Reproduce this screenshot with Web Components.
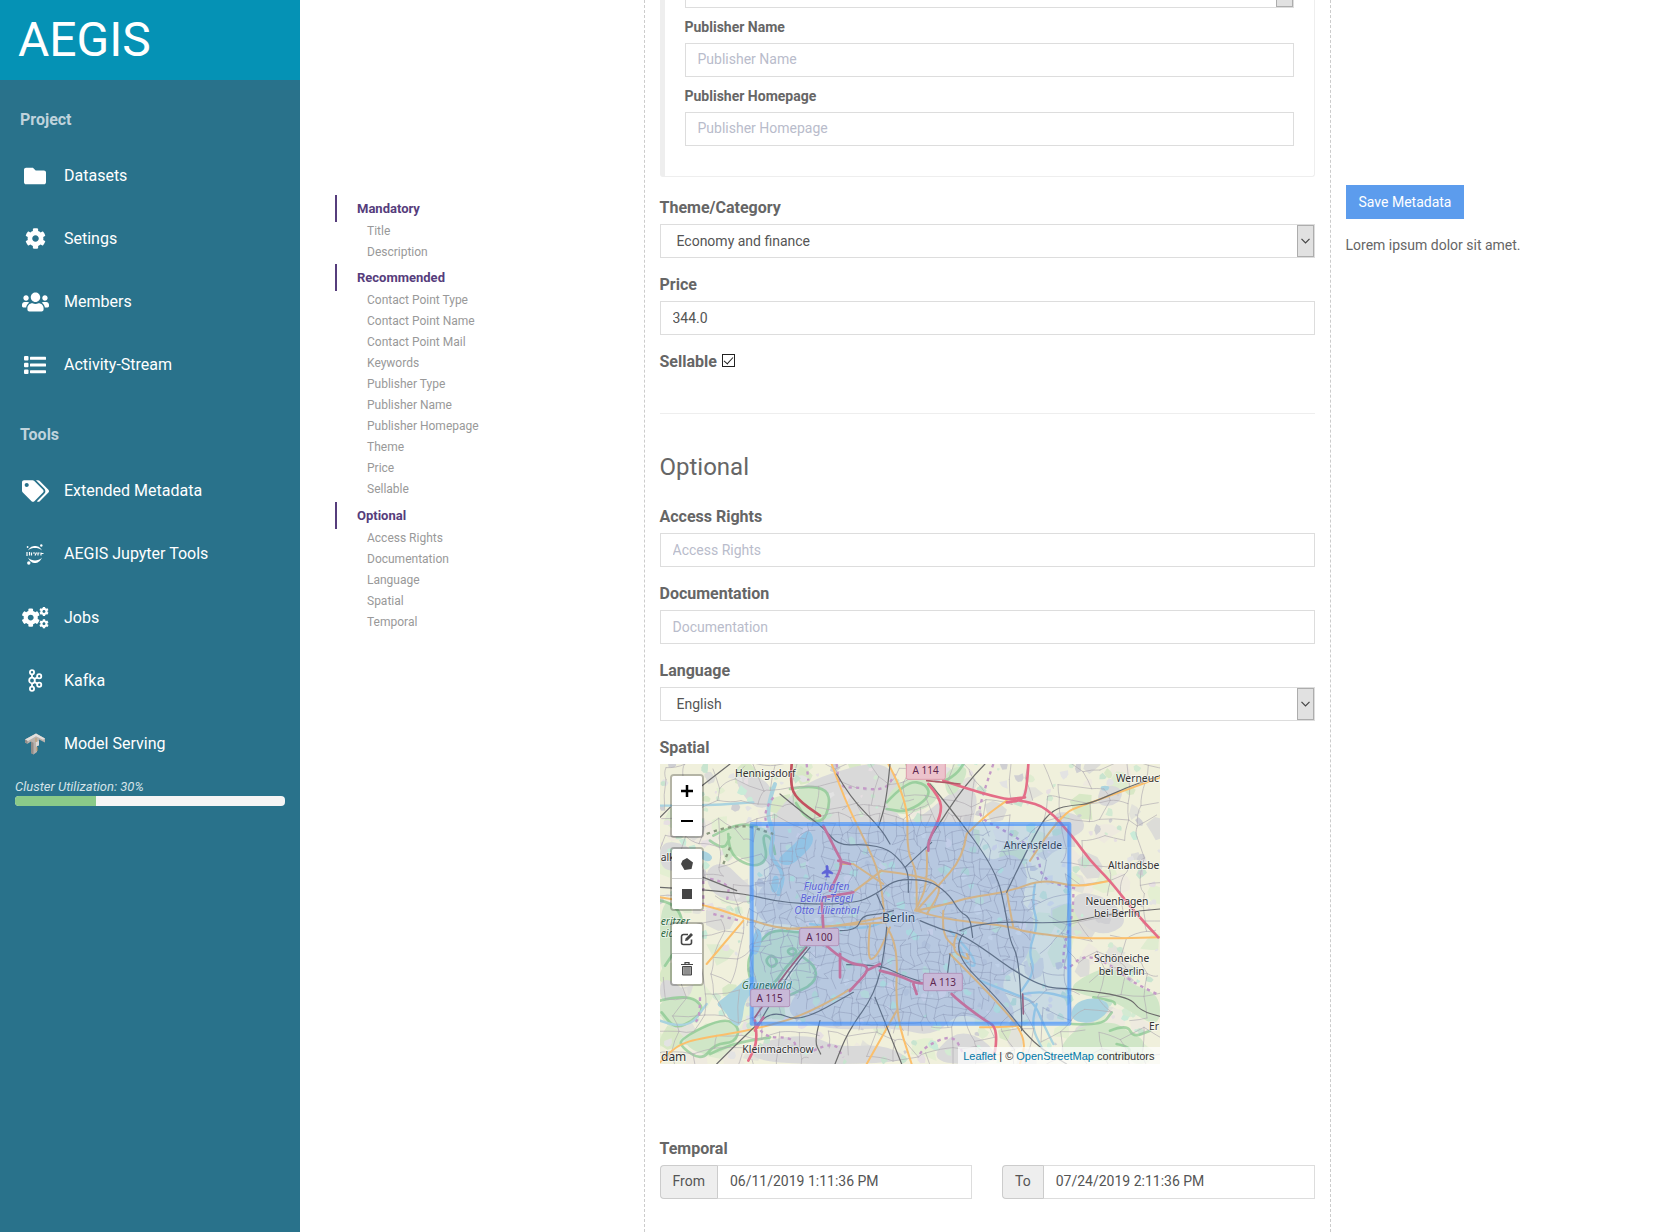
<!DOCTYPE html>
<html lang="en">
<head>
<meta charset="utf-8">
<title>AEGIS Metadata</title>
<style>
  body { margin: 0; font: 14px/20px Roboto, "Liberation Sans", sans-serif; color: #666; background: #fff; }
</style>
</head>
<body>
<app-shell>
  <side-bar slot="side">
    <nav-group heading="Project">
      <nav-item icon="folder">Datasets</nav-item>
      <nav-item icon="cog">Setings</nav-item>
      <nav-item icon="users">Members</nav-item>
      <nav-item icon="list">Activity-Stream</nav-item>
    </nav-group>
    <nav-group heading="Tools">
      <nav-item icon="tags">Extended Metadata</nav-item>
      <nav-item icon="jupyter" logo>AEGIS Jupyter Tools</nav-item>
      <nav-item icon="cogs">Jobs</nav-item>
      <nav-item icon="kafka">Kafka</nav-item>
      <nav-item icon="tensor" logo>Model Serving</nav-item>
    </nav-group>
    <usage-meter value="30"></usage-meter>
  </side-bar>
  <page-toc slot="toc">
    <toc-group heading="Mandatory" items="Title|Description"></toc-group>
    <toc-group heading="Recommended" items="Contact Point Type|Contact Point Name|Contact Point Mail|Keywords|Publisher Type|Publisher Name|Publisher Homepage|Theme|Price|Sellable"></toc-group>
    <toc-group heading="Optional" items="Access Rights|Documentation|Language|Spatial|Temporal"></toc-group>
  </page-toc>
  <metadata-form slot="form"></metadata-form>
  <save-panel slot="actions"></save-panel>
</app-shell>

<script>
const define = (name, html, setup) => {
  const tpl = document.createElement('template');
  tpl.innerHTML = '<style>*{box-sizing:border-box}:host{display:block}</style>' + html;
  customElements.define(name, class extends HTMLElement {
    constructor() {
      super();
      this.attachShadow({ mode: 'open' }).append(tpl.content.cloneNode(true));
    }
    connectedCallback() {
      if (setup && !this.ready) { this.ready = true; setup(this, this.shadowRoot); }
    }
  });
};

const COG = 'M487.4 315.7l-42.6-24.6c4.3-23.2 4.3-47 0-70.2l42.6-24.6c4.9-2.8 7.1-8.6 5.5-14-11.1-35.6-30-67.8-54.7-94.6-3.8-4.1-10-5.1-14.8-2.3L380.8 110c-17.9-15.4-38.5-27.3-60.8-35.1V25.8c0-5.6-3.9-10.5-9.4-11.7-36.7-8.2-74.3-7.8-109.2 0-5.5 1.2-9.4 6.1-9.4 11.7V75c-22.2 7.9-42.8 19.8-60.8 35.1L88.7 85.5c-4.9-2.8-11-1.9-14.8 2.3-24.7 26.7-43.6 58.9-54.7 94.6-1.7 5.4.6 11.2 5.5 14L67.3 221c-4.3 23.2-4.3 47 0 70.2l-42.6 24.6c-4.9 2.8-7.1 8.6-5.5 14 11.1 35.6 30 67.8 54.7 94.6 3.8 4.1 10 5.1 14.8 2.3l42.6-24.6c17.9 15.4 38.5 27.3 60.8 35.1v49.2c0 5.6 3.9 10.5 9.4 11.7 36.7 8.2 74.3 7.8 109.2 0 5.5-1.2 9.4-6.1 9.4-11.7v-49.2c22.2-7.9 42.8-19.8 60.8-35.1l42.6 24.6c4.9 2.8 11 1.9 14.8-2.3 24.7-26.7 43.6-58.9 54.7-94.6 1.5-5.5-.7-11.3-5.6-14.1zM256 336c-44.1 0-80-35.9-80-80s35.9-80 80-80 80 35.9 80 80-35.9 80-80 80z';
const ICONS = {
  folder: [22, 22, '0 0 512 512', '<path d="M464 128H272l-64-64H48C21.5 64 0 85.5 0 112v288c0 26.5 21.5 48 48 48h416c26.5 0 48-21.5 48-48V176c0-26.5-21.5-48-48-48z"/>'],
  cog: [21, 21, '0 0 512 512', `<path d="${COG}"/>`],
  users: [27, 22, '0 0 640 512', '<path d="M96 224c35.3 0 64-28.7 64-64s-28.7-64-64-64-64 28.7-64 64 28.7 64 64 64zm448 0c35.3 0 64-28.7 64-64s-28.7-64-64-64-64 28.7-64 64 28.7 64 64 64zm32 32h-64c-17.6 0-33.5 7.1-45.1 18.6 40.3 22.1 68.9 62 75.1 109.4h66c17.7 0 32-14.3 32-32v-32c0-35.3-28.7-64-64-64zm-256 0c61.9 0 112-50.1 112-112S381.9 32 320 32 208 82.1 208 144s50.1 112 112 112zm76.8 32h-8.3c-20.8 10-43.9 16-68.5 16s-47.6-6-68.5-16h-8.3C179.6 288 128 339.6 128 403.2V432c0 26.5 21.5 48 48 48h288c26.5 0 48-21.5 48-48v-28.8c0-63.6-51.6-115.2-115.2-115.2zm-223.7-13.4C161.5 263.1 145.6 256 128 256H64c-35.3 0-64 28.7-64 64v32c0 17.7 14.3 32 32 32h65.9c6.3-47.4 34.9-87.3 75.2-109.4z"/>'],
  list: [22, 18, '0 0 22 18', '<rect width="4.5" height="4.5" rx="1"/><rect y="6.8" width="4.5" height="4.5" rx="1"/><rect y="13.5" width="4.5" height="4.5" rx="1"/><rect x="6" y=".8" width="16" height="3" rx=".6"/><rect x="6" y="7.5" width="16" height="3" rx=".6"/><rect x="6" y="14.2" width="16" height="3" rx=".6"/>'],
  tags: [27, 22, '0 0 640 512', '<path d="M497.9 225.9L286 14A48 48 0 0 0 252 0H48C21.5 0 0 21.5 0 48v204a48 48 0 0 0 14 34l212 212c18.7 18.7 49 18.7 67.8 0l204-204c18.8-18.7 18.8-49 .1-68zM112 160c-26.5 0-48-21.5-48-48s21.5-48 48-48 48 21.5 48 48-21.5 48-48 48zm514 133.8L421.8 498c-18.7 18.7-49 18.7-67.9 0l-.3-.4L527.6 323.5c17-17 26.4-39.6 26.4-63.6s-9.4-46.7-26.4-63.7L331.4 0h48.7a48 48 0 0 1 34 14L626 226c18.7 18.7 18.7 49 0 67.8z"/>'],
  jupyter: [18, 21, '0 0 18 21', '<path d="M2 6.5C4 2.7 6.5 2 9 2s5 .7 7 4.5C14 4.600 11.5 4 9 4s-5 .6-7 2.500zM2 13.500C4 17.800 6.500 19 9 19s5-1.200 7-5.500c-2 2.200-4.500 3-7 3s-5-.8-7-3z"/><circle cx="15.300" cy="1.500" r="1.200"/><circle cx="1.600" cy="3" r=".9"/><circle cx="2.800" cy="19" r="1.700"/><path d="M1 8v4M3.500 8v3.500M5.500 8.500v3M7 9h2M9 11.500l1.500-3M12 8.500v3M12 9h1.500M15 8.500v3M15.500 9.500h2" stroke="#fff" stroke-width="1.200"/>'],
  cogs: [27, 22, '0 0 27 22', `<g transform="translate(-.7 1.2) scale(.0368)"><path d="${COG}"/></g><g transform="translate(17.2 -.3) scale(.0186)"><path d="${COG}"/></g><g transform="translate(17.2 12) scale(.0186)"><path d="${COG}"/></g>`],
  kafka: [16, 23, '0 0 16 23', '<g fill="none" stroke="#fff" stroke-width="1.8"><circle cx="5" cy="3.2" r="2.100"/><circle cx="5" cy="11.5" r="2.8"/><circle cx="5" cy="19.8" r="2.1"/><circle cx="12.2" cy="7.3" r="2.1"/><circle cx="12.2" cy="15.7" r="2.1"/><path d="M5 5.3v3.4M5 14.3v3.4M7.5 10l2.8-1.6M7.5 13l2.8 1.6"/></g>'],
  tensor: [20, 22, '0 0 20 22', '<path d="M0 6.5L11 .5l9 5v4l-6-3v5l-2 1v6.5L8.5 21.5 6 20V8.5L2.5 10.8 0 9.5z" fill="#b9b3ae"/><path d="M0 6.5L11 .5l9 5-2 1.3-7-3.6-8.5 5z" fill="#e3dfdc"/><path d="M11 9l3-1v4.500l-3 1z" fill="#dcd8d4"/><path d="M6 8.5l2.5 1.3v11.700L6 20zM0 6.500l2.500 1.200v3.100L0 9.500z" fill="#928c88"/><path d="M11 5v4M12 14v4" stroke="#c79a63" stroke-width="1"/>']
};

define('app-shell', `
<style>
  :host { display: grid; grid-template-columns: 300px minmax(0, 1fr); min-height: 100vh; }
  main { display: grid; grid-template-columns: minmax(0, 1fr) minmax(0, 2fr) minmax(0, 1fr); overflow: hidden; }
  .middle { border: dashed #ccc; border-width: 0 1px; padding: 0 15px; }
  .right { padding: 185px 15px 0; }
  .left { padding-top: 195px; }
</style>
<slot name="side"></slot>
<main>
  <div class="left"><slot name="toc"></slot></div>
  <div class="middle"><slot name="form"></slot></div>
  <div class="right"><slot name="actions"></slot></div>
</main>`);

define('side-bar', `
<style>
  :host { background: #29728b; color: #fff; }
  header { height: 80px; padding: 0 18px; background: #0592b5; display: flex; align-items: center; }
  .brand { font: 48px/60px Roboto, "Liberation Sans", sans-serif; }
</style>
<header><div class="brand">AEGIS</div></header>
<slot></slot>`);

define('nav-group', `
<style>
  h2 { margin: 0; padding: 28px 20px 13px; font-size: 16px; line-height: 23px; font-weight: 700; color: #bfd3dc; }
  :host(:not(:first-child)) h2 { padding-top: 27px; }
</style>
<h2></h2><nav><slot></slot></nav>`, (el, root) => {
  root.querySelector('h2').textContent = el.getAttribute('heading');
});

define('nav-item', `
<style>
  a { display: flex; align-items: center; gap: 14px; height: 63px; padding: 0 20px; color: #fff; font-size: 16px; text-decoration: none; }
  :host([logo]) a { height: 64px; }
  .icon { flex: none; width: 30px; display: flex; justify-content: center; }
  svg { display: block; fill: #fff; }
</style>
<a href="#"><span class="icon"></span><slot></slot></a>`, (el, root) => {
  const [w, h, box, body] = ICONS[el.getAttribute('icon')];
  root.querySelector('.icon').innerHTML = `<svg width="${w}" height="${h}" viewBox="${box}" aria-hidden="true">${body}</svg>`;
});

define('usage-meter', `
<style>
  :host { padding: 2px 15px; }
  .text { font-size: 13px; line-height: 18px; font-style: italic; color: #d4e3e8; }
  .track { height: 10px; border-radius: 4px; background: #f5f5f5; overflow: hidden; }
  .bar { height: 100%; background: #8aca89; }
</style>
<div class="text"></div><div class="track" role="progressbar"><div class="bar"></div></div>`, (el, root) => {
  const v = el.getAttribute('value') + '%';
  root.querySelector('.text').textContent = 'Cluster Utilization: ' + v;
  root.querySelector('.bar').style.width = v;
});

define('page-toc', `<style>:host { padding-left: 35px; }</style><nav><slot></slot></nav>`);

define('toc-group', `
<style>
  :host(:not(:first-child)) { margin-bottom: 1px; }
  a { display: block; color: #999; text-decoration: none; font-size: 12px; line-height: 18px; padding: 0 0 3px 32px; }
  a.head { border-left: 2px solid #563d7c; padding: 4px 0 3px 20px; font-size: 13px; line-height: 20px; font-weight: 700; color: #563d7c; }
</style>`, (el, root) => {
  const add = (text, cls) => {
    const a = document.createElement('a');
    a.href = '#'; a.className = cls; a.textContent = text;
    root.append(a);
  };
  add(el.getAttribute('heading'), 'head');
  el.getAttribute('items').split('|').forEach(t => add(t, ''));
});

const FIELD = `
<style>
  :host { margin-bottom: 15px; }
  :host([compact]) { margin-bottom: 8px; }
  label { display: block; font-size: 16px; line-height: 23px; font-weight: 700; color: #666; margin-bottom: 5px; }
  :host([compact]) label { font-size: 14px; margin-bottom: 4px; }
  input, select { display: block; width: 100%; height: 34px; margin: 0; border: 1px solid #ddd; border-radius: 0; background: #fff; padding: 0 12px; font: 14px/20px Roboto, "Liberation Sans", sans-serif; color: #555; }
  :host([compact]) input { padding-bottom: 2px; }
  input::placeholder { color: #b9bccb; opacity: 1; }
</style>`;

define('text-field', FIELD + `<label for="c"></label><input id="c" type="text">`, (el, root) => {
  root.querySelector('label').textContent = el.getAttribute('label');
  const input = root.querySelector('input');
  input.value = el.getAttribute('value') || '';
  input.placeholder = el.getAttribute('placeholder') || '';
});

define('select-field', FIELD + `
<style>
  .wrap { position: relative; }
  select { appearance: none; padding-left: 16px; }
  .arrow { position: absolute; top: 1px; right: 1px; bottom: 1px; width: 17px; border: 1px solid #adadad; background: #e1e1e1; pointer-events: none; display: flex; align-items: center; justify-content: center; }
</style>
<label for="c"></label>
<div class="wrap"><select id="c"><option></option></select>
<span class="arrow"><svg width="9" height="6" viewBox="0 0 9 6"><path d="M.5 .8l4 4 4-4" fill="none" stroke="#444" stroke-width="1.2"/></svg></span></div>`, (el, root) => {
  const label = root.querySelector('label');
  if (el.hasAttribute('label')) label.textContent = el.getAttribute('label');
  else { label.remove(); root.querySelector('select').setAttribute('aria-label', 'Publisher'); }
  root.querySelector('option').textContent = el.getAttribute('value') || '';
});

define('check-field', `
<style>
  label { display: inline-flex; align-items: center; gap: 5px; font-size: 16px; line-height: 23px; font-weight: 700; color: #666; }
  input { appearance: none; margin: 0 0 2px; width: 13px; height: 13px; border: 1px solid #222; background: #fff; display: flex; justify-content: center; }
  input:checked::before { content: ""; width: 4px; height: 8px; border: solid #222; border-width: 0 1px 1px 0; transform: rotate(42deg); }
</style>
<label><slot></slot><input type="checkbox" checked></label>`);

define('date-field', `
<style>
  :host { display: flex; }
  label { flex: none; padding: 5px 12px; height: 34px; line-height: 20px; border: 1px solid #ccc; border-right: 0; border-radius: 4px 0 0 4px; background: #eee; color: #555; }
  input { flex: 1; min-width: 0; height: 34px; margin: 0; border: 1px solid #ddd; border-left-color: #ccc; padding: 0 12px 2px; font: 14px/20px Roboto, "Liberation Sans", sans-serif; color: #555; }
</style>
<label for="d"></label><input id="d" type="text">`, (el, root) => {
  root.querySelector('label').textContent = el.getAttribute('label');
  root.querySelector('input').value = el.getAttribute('value');
});

define('metadata-form', `
<style>
  .box { margin-top: -26px; padding: 0 20px 22px; border: 1px solid #eee; border-left-width: 5px; border-top: 0; border-radius: 3px; margin-bottom: 19px; }
  hr { border: 0; border-top: 1px solid #eee; margin: 40px 0; }
  h3 { margin: 0 0 25px; font-size: 24px; line-height: 27px; font-weight: 400; }
  h4 { margin: 0 0 5px; font-size: 16px; line-height: 23px; font-weight: 700; }
  h3 + text-field { margin-top: -1px; }
  map-view { margin-bottom: 73px; }
  .dates { display: grid; grid-template-columns: 1fr 1fr; gap: 30px; }
</style>
<form>
  <div class="box">
    <select-field compact></select-field>
    <text-field compact label="Publisher Name" placeholder="Publisher Name"></text-field>
    <text-field compact label="Publisher Homepage" placeholder="Publisher Homepage"></text-field>
  </div>
  <select-field label="Theme/Category" value="Economy and finance"></select-field>
  <text-field label="Price" value="344.0"></text-field>
  <check-field>Sellable</check-field>
  <hr>
  <h3>Optional</h3>
  <text-field label="Access Rights" placeholder="Access Rights"></text-field>
  <text-field label="Documentation" placeholder="Documentation"></text-field>
  <select-field label="Language" value="English"></select-field>
  <h4>Spatial</h4>
  <map-view></map-view>
  <h4>Temporal</h4>
  <div class="dates">
    <date-field label="From" value="06/11/2019 1:11:36 PM"></date-field>
    <date-field label="To" value="07/24/2019 2:11:36 PM"></date-field>
  </div>
</form>`);

define('save-panel', `
<style>
  button { height: 34px; padding: 0 13px; border: 0; background: #5c9ced; color: #fff; font: 14px/20px Roboto, "Liberation Sans", sans-serif; }
  p { margin: 16px 0 0; line-height: 20px; }
</style>
<button type="button">Save Metadata</button>
<p>Lorem ipsum dolor sit amet.</p>`);

define('map-view', `
<style>
  :host { position: relative; width: 500px; max-width: 100%; height: 300px; overflow: hidden; background: #f0f0dc; }
  svg.map { display: block; width: 500px; height: 300px; }
  svg.map text { font-family: "Noto Sans", sans-serif; font-size: 31px; fill: #333; text-anchor: middle; paint-order: stroke; stroke: #fff; stroke-opacity: .6; stroke-width: 5px; stroke-linejoin: round; }
  svg.map .left { text-anchor: start; }
  svg.map .right { text-anchor: end; }
  svg.map .air text { font-style: italic; fill: #6a5acd; stroke-opacity: .3; }
  svg.map .green { font-style: italic; fill: #2f6b46; }
  svg.map .big { font-size: 36px; }
  svg.map .shield text { stroke: none; fill: #5e2750; font-size: 30px; }
  .tools { position: absolute; top: 10px; left: 10px; display: flex; flex-direction: column; gap: 9px; }
  .bar { border: 2px solid rgba(0,0,0,.25); border-radius: 4px; background-clip: padding-box; }
  .bar:last-child { margin-top: 2px; }
  button { display: flex; align-items: center; justify-content: center; width: 30px; height: 30px; padding: 0; border: 0; background: #fff; }
  button:first-child { border-bottom: 1px solid #ccc; border-radius: 2px 2px 0 0; }
  button:last-child { border-radius: 0 0 2px 2px; }
  .attr { position: absolute; right: 0; bottom: 0; padding: 2px 5px 0; background: rgba(255,255,255,.7); font: 11px/15px "Liberation Sans", sans-serif; color: #333; }
  .attr a { color: #0078a8; text-decoration: none; }
</style>
<svg class="map" viewBox="0 0 1500 900" fill="none" stroke-linejoin="round" stroke-linecap="round">
  <rect width="1500" height="900" fill="#f0f0dc"/>
  <g class="patches"></g>
  <g fill="#d9d9d9" class="soft">
    <path d="M330 170L420 60 600 0 680 0 720 60 700 150 760 180 900 60 960 90 930 200 980 300 1060 260 1110 330 1080 420 1130 460 1100 600 1010 650 1080 760 1000 790 900 740 820 820 700 790 520 800 380 760 400 690 480 640 440 560 420 480 300 480 280 400 340 330 300 240z"/>
    <path d="M130 320l60-30 60 60 50 40-30 30-110-20zM0 230l80 10 60 60-60 20-80 0zM300 830l150-20 80 40 150-10 90 60-510 0zM1240 380l110 20 60 80-90 40-80-60zM1170 140l90 10 20 50-70 30zM640 60l60 30-20 80-60-20zM210 30l110 10 30 80-70 20zM0 640l60 20 30 60-90 0zM880 800l90 20 60 80-230 0zM1320 60l70 10-10 50-70 10z"/>
  </g>
  <g class="spots"></g>
  <g fill="#d0e6c7" class="soft">
    <path d="M390 90l50-25 60 10 10 50-20 60-60-30-30-40zM170 215l60-40 110 20-10 90-50 20-60-40-20 40-20-70z"/>
    <path d="M290 540l45-48 80 12 70 0-45 50-70 80-10 50-80 0-10-80zM430 580l40 20 0 60-80 30-10-40zM0 710l80-20 55 40-40 40-60 30-40-50zM70 810l120-50 50 30-10 50-80 40-70-30zM0 410l60 10 20 100-60 90-20 10z"/>
    <path d="M1230 660l120-60 60 60 90 30 0 100-80-40-60-40-110-20zM1240 790l120-20 40 30 60 30-20 60-260 0zM670 110l60-70 90 10 20 60-80 40-60 0zM850 20l80-20-30 80-40 20z"/>
  </g>
  <g stroke="#7fc489" stroke-width="8" opacity=".65" class="soft">
    <path d="M390 75l50-10 62 12 8 45-22 55-50-15-30-45M160 215l70-38 60 10M205 210l0 60 70 40 50-20-20-80 30 10 10 50M150 230l40 30 20-40"/>
    <path d="M290 545l45-50 85 12 60-6-45 50-60 60-40 60-60 0-15-80zM315 590l20-20 20 25-20 18zM430 580l40 25-5 55-80 35M380 560l20-10 12 15-18 10z"/>
    <path d="M0 710l80-20 55 40-35 40-55 25-40-50M60 825l130-65 50 30-15 45-60 5-40 50-60-40zM150 870l60-30 120-20M0 410l55 10 20 95-60 90"/>
    <path d="M1235 780l90 5 30-40M1350 800l50-20 20 40 50-20M1370 840l50 10-30 30M680 115l60-65 60 10 10 40-70 45-60-10M850 0l-10 60 50-30 20-30M740 0l10 40M1300 700l60 10 5 10"/>
  </g>
  <g fill="#aad3df" class="soft">
    <path d="M445 190l20 40-30 40-50 40-40-20 60-50zM195 700l90-80 10 60-40 20-10 90-30-10-20-40-30-20zM1240 720l50-20 50 10 10 30-50 40-70-10zM290 480l20 40-20 60-20-20zM340 330l20 10-10 50-20-10zM1320 65l30 0-5 15-20 0zM120 255l40 20-10 20-30-10z"/>
    <g fill="none" stroke="#aad3df">
      <path d="M345 60l-30 80 30 70-20 60 50 60-20 60" stroke-width="12"/>
      <path d="M870 500l60 60 20 50-30-10-20-50M1125 360l-10 60 20 60-30 80 20 60-40 60M1090 690l50-10 80 20M0 770l80 30 60-80M960 650l100 40 60 20 30 70 30 60M450 480l150 20 80-30M0 125l130 0 150-10M1130 720l-20 60 40 80" stroke-width="7"/>
    </g>
  </g>
  <g class="streets" stroke="#b0acb2" stroke-width="2"></g>
  <g stroke="#c49ac7" stroke-width="7" stroke-dasharray="10 12" stroke-linecap="butt" class="soft">
    <path d="M340 100l-30 40 15 60M440 0l5 50M530 0l5 70 50 0 90 10 30-50M1000 0l-35 100-10 60 60 30 70 40 50 40 10 80 110 25M1240 390l0 60-30 100 0 80 60-60 80 30 60 50 80 40M130 350l0 90M150 345l60 10-10 60M160 450l80 20M120 700l0 60-20 20M280 760l20 60 100 0 10 40M780 870l10-20 90-40 30 60M460 860l60-30 30 50"/>
    <path d="M140 210l90-35 110 35M190 300l20-50" stroke="#8c9a80"/>
  </g>
  <g stroke="#fbbf6b" stroke-width="6" class="soft">
    <path d="M515 0l40 110 60 120 45 100 15 140M685 0l60 110-5 150 30 60 0 110M800 260l5 100-40 80M920 210l-10 70-80 90-60 70M920 210l50-50 70-50M0 400l130 20 130 45 120 35 160-15 130-25M380 495l300-20"/>
    <path d="M770 440l90-20 70-20 110-15 110-40 100 25 100-20M770 440l70 25 200 20 60 20 170 20 230-5M660 320l130 15 60 35-50 80M665 320l-80 60M580 300l90 60M540 300l35 0M630 480l-10 110 30-10 40-90M680 490l35 45-10 210 50 155M710 740l-90 160M580 670l-130 80-180 50-160 25-60 20-50 50M890 510l-20 50 60 30-10-20M870 570l140 140 90 110-20 80M1110 290l90-140 80-30 140-50 80-30M1040 380l10 60 10 50M850 440l-5 70 40 40M960 790l60 0 60-5M250 470l-110 130"/>
  </g>
  <g stroke="#6c6c6c" stroke-width="3.6" class="soft">
    <path d="M360 90l60 50 70 50 45 55 80-5 70 15 40 40 20 30 0 60M735 310l80-75M530 30l40 70 90 90 30 50M210 0l-90 70M30 130l-30 30M975 0l-60 60-110 170M810 60l60 70 140 190 30 140 10 70 25 50 10 160 0 60M0 370l220 10 160 40 200 0 70-30 50-40 60-5 60 10 50 40 30 50 30 15 8 60M130 340l100 40"/>
    <path d="M680 490l-5 70-30 130-80 110-40 100M560 602l100 0 60 30 60 20M540 500l50 0 15-45 55-5 40-10M780 470l70 30 60 10 220 160 120 5 160 25 30 40 70 20M910 510l-40 50 150 150 100 130 100 60M900 500l70-30 240 10 130-30 160-15M1040 385l90-190 50-60 60-12 50-3 110-50 100-35M645 700l80 200M480 770l-18 60 20 40M170 900l110-110 60-50 80 35 160-90M690 0l-10 110-25 80M650 390l20 45M450 550l-60 70-100 170M870 570l-10 80"/>
  </g>
  <g stroke="#e46d87" stroke-width="8" class="soft">
    <path d="M805 60l35 40 5 50-40 80 0 30M850 50l150 50 90 10 70 20 80 90 50 70 60 60 70 90 75 80M1105 0l-5 90-20 20-40 5M1050 105l45-5M490 185l40 80 20 35-40 80M535 290l35 10M490 400l90-15M485 410l5 80"/>
    <path d="M395 0l-5 60 20 45 70 50" stroke="#c3525f"/>
    <path d="M500 545l60 55 80 5-70 75M540 570l0 70M620 620l40-20M660 620l60 15 50 25 60-5M760 660l10 30M875 690l20 20 80 60 30 15 5 50-10 50M285 770l10 60-30 60M310 760l-25 40"/>
    <path d="M440 550l-60 70-95 140M1088 690l2 60M800 50l100 10" stroke="#b05a66" stroke-width="5"/>
  </g>
  <path d="M498 306q3-5 6 0l1 11 13 9v4l-13-3-1 8 5 4h-15l5-4-1-8-12 3v-4l12-9z" fill="#6a5acd" stroke="#6a5acd" stroke-width="2"/>
  <g class="air"><text x="500" y="378">Flughafen</text><text x="500" y="414">Berlin-Tegel</text><text x="500" y="450">Otto Lilienthal</text></g>
  <text x="716" y="474" class="big">Berlin</text>
  <text x="1119" y="254">Ahrensfelde</text>
  <text x="320" y="674" class="green">Grunewald</text>
  <rect x="275" y="180" width="953" height="599" fill="#38f" fill-opacity=".2" stroke="#38f" stroke-opacity=".6" stroke-width="12"/>
  <text x="316" y="40">Hennigsdorf</text>
  <text x="1497" y="54" class="right">Werneuc</text>
  <text x="1371" y="422">Neuenhagen</text><text x="1371" y="459">bei Berlin</text>
  <text x="1498" y="314" class="right">Altlandsbe</text>
  <text x="1385" y="594">Schöneiche</text><text x="1385" y="632">bei Berlin</text>
  <text x="1497" y="798" class="right">Er</text>
  <text x="354" y="868">Kleinmachnow</text>
  <text x="3" y="892" class="big left">dam</text>
  <text x="2" y="290" class="left">alk</text>
  <text x="2" y="482" class="green left">eritzer</text><text x="2" y="518" class="green left">eid</text>
  <g class="shield">
    <g fill="#ecc3cc" stroke="#dc9aab" stroke-width="3"><rect x="739" y="-6" width="117" height="52" rx="5"/></g>
    <g fill="#c8b9d8" stroke="#b293bb" stroke-width="3"><rect x="419" y="493" width="117" height="52" rx="5"/><rect x="790" y="628" width="117" height="52" rx="5"/><rect x="272" y="676" width="117" height="52" rx="5"/></g>
    <text x="797" y="31">A 114</text><text x="478" y="532">A 100</text><text x="849" y="665">A 113</text><text x="329" y="713">A 115</text>
  </g>
</svg>
<div class="tools">
  <div class="bar">
    <button type="button" aria-label="Zoom in"><svg width="14" height="14"><path d="M1 7h12M7 1v12" stroke="#000" stroke-width="2.5"/></svg></button>
    <button type="button" aria-label="Zoom out"><svg width="14" height="14"><path d="M1 7h12" stroke="#000" stroke-width="2"/></svg></button>
  </div>
  <div class="bar">
    <button type="button" aria-label="Draw a polygon"><svg width="12" height="12"><path d="M6 0l6 4.5-1.5 6.500-7 1L0 6 1.500 2.500z" fill="#464646"/></svg></button>
    <button type="button" aria-label="Draw a rectangle"><svg width="10" height="10"><rect width="10" height="10" fill="#464646"/></svg></button>
  </div>
  <div class="bar">
    <button type="button" aria-label="Edit layers"><svg width="14" height="14" viewBox="0 0 14 14"><path d="M8 2.5H3.5a2 2 0 0 0-2 2v6a2 2 0 0 0 2 2h6a2 2 0 0 0 2-2V7.5" fill="none" stroke="#464646" stroke-width="1.6"/><path d="M5 9l.6-2.6L11 1l2 2-5.4 5.4z" fill="#464646"/></svg></button>
    <button type="button" aria-label="Delete layers"><svg width="12" height="14" viewBox="0 0 12 14"><path d="M0 2.5h12M4 2V.7h4V2" fill="none" stroke="#464646" stroke-width="1.2"/><path d="M1.5 4.5h9V13h-9z" fill="#a0a0a0" stroke="#464646"/><path d="M4 5v7.5M6 5v7.5M8 5v7.5" stroke="#777" stroke-width=".8"/></svg></button>
  </div>
</div>
<div class="attr"><a href="#">Leaflet</a> | © <a href="#">OpenStreetMap</a> contributors</div>`, (el, root) => {
  // Round the corners of every polyline: each vertex becomes the control point
  // of a quadratic curve between the midpoints of its neighbouring segments.
  const soften = d => (d.match(/M[^M]+/g) || []).map(part => {
    const closed = /z/.test(part), pts = [];
    let rel = false;
    for (const [, cmd, nums] of part.matchAll(/([MLl])([^MLlz]*)/g)) {
      rel = cmd === 'l';
      const n = nums.match(/-?[\d.]+/g).map(Number);
      for (let i = 0; i + 1 < n.length; i += 2) {
        const p = pts[pts.length - 1];
        pts.push(rel ? [p[0] + n[i], p[1] + n[i + 1]] : [n[i], n[i + 1]]);
      }
    }
    const mid = (a, b) => `${(a[0] + b[0]) / 2} ${(a[1] + b[1]) / 2}`;
    const last = pts.length - 1;
    if (closed) {
      return `M${mid(pts[last], pts[0])}` + pts.map((p, i) => `Q${p[0]} ${p[1]} ${mid(p, pts[(i + 1) % pts.length])}`).join('') + 'z';
    }
    let out = `M${pts[0][0]} ${pts[0][1]}`;
    for (let i = 1; i < last; i++) out += `Q${pts[i][0]} ${pts[i][1]} ${mid(pts[i], pts[i + 1])}`;
    return out + `L${pts[last][0]} ${pts[last][1]}`;
  }).join('');
  root.querySelectorAll('.soft path').forEach(p => p.setAttribute('d', soften(p.getAttribute('d'))));

  let seed = 7;
  const rnd = () => (seed = (seed * 16807) % 2147483647) / 2147483647;
  const blob = (x, y, r) => {
    let d = '';
    for (let i = 0; i < 7; i++) {
      const a = i / 7 * 6.283, q = r * (.5 + rnd() * .7);
      d += (i ? 'L' : 'M') + (x + Math.cos(a) * q | 0) + ' ' + (y + Math.sin(a) * q | 0);
    }
    return d + 'z';
  };
  const scatter = (n, size, colours) => Array.from({ length: n }, () =>
    `<path d="${blob(rnd() * 1500, rnd() * 900, size * (.4 + rnd()))}" fill="${colours[rnd() * colours.length | 0]}"/>`).join('');
  root.querySelector('.patches').innerHTML = scatter(190, 34, ['#d8e8c6', '#dfecd0', '#e2e2da', '#eeeadf', '#e4efd2', '#dcdcd8']);
  root.querySelector('.spots').innerHTML = scatter(420, 12, ['#c8e4cf', '#d3ead2', '#e6dfe2', '#e3e3e3', '#cfcfd2', '#c9ebd8']);
  const inCity = (x, y) => ((x - 690) / 430) ** 2 + ((y - 450) / 340) ** 2 < 1;
  const mesh = (step, test, keep) => {
    const node = {}, cols = Math.ceil(1500 / step), rows = Math.ceil(900 / step);
    for (let i = 0; i <= cols; i++) for (let j = 0; j <= rows; j++)
      node[i + '_' + j] = [(i + (rnd() - .5) * .8) * step | 0, (j + (rnd() - .5) * .8) * step | 0];
    let d = '';
    for (let i = 0; i < cols; i++) for (let j = 0; j < rows; j++) {
      const [x, y] = node[i + '_' + j];
      if (!test(x, y)) continue;
      for (const k of [(i + 1) + '_' + j, i + '_' + (j + 1)]) {
        if (rnd() >= keep) continue;
        const [u, v] = node[k], bend = step * .3;
        d += `M${x} ${y}Q${(x + u) / 2 + (rnd() - .5) * bend | 0} ${(y + v) / 2 + (rnd() - .5) * bend | 0} ${u} ${v}`;
      }
    }
    return `<path d="${d}"/>`;
  };
  root.querySelector('.streets').innerHTML = mesh(26, inCity, .75) + mesh(58, (x, y) => !inCity(x, y), .66);
});
</script>
</body>
</html>
